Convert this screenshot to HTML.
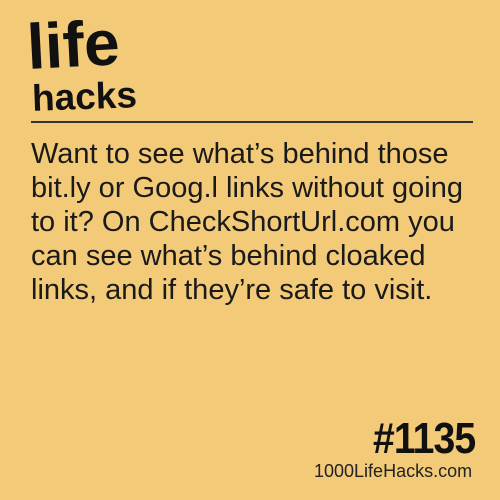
<!DOCTYPE html>
<html><head><style>
body{margin:0;width:500px;height:500px;background:#f2ca78;position:relative;overflow:hidden;font-family:"Liberation Sans",sans-serif;color:#111}
.a{position:absolute;white-space:nowrap}
</style></head><body>
<div class="a" style="left:29px;top:10px;font-size:64px;font-weight:bold;letter-spacing:0px;transform:rotate(-3deg);transform-origin:left bottom">life</div>
<div class="a" style="left:32px;top:76px;font-size:37px;font-weight:bold;letter-spacing:0px;transform:rotate(-2deg)">hacks</div>
<div class="a" style="left:31px;top:121px;width:442px;height:2px;background:#333"></div>
<div class="a" style="left:31px;top:137px;font-size:29px;line-height:34px;color:#1a1a1a">Want to see what’s behind those<br>bit.ly or Goog.l links without going<br>to it? On CheckShortUrl.com you<br>can see what’s behind cloaked<br>links, and if they’re safe to visit.</div>
<div class="a" style="left:373px;top:414px;font-size:44px;font-weight:bold;letter-spacing:-1px;transform:scaleX(0.89);transform-origin:left">#1135</div>
<div class="a" style="left:314px;top:461px;font-size:18px;color:#222">1000LifeHacks.com</div>
</body></html>
